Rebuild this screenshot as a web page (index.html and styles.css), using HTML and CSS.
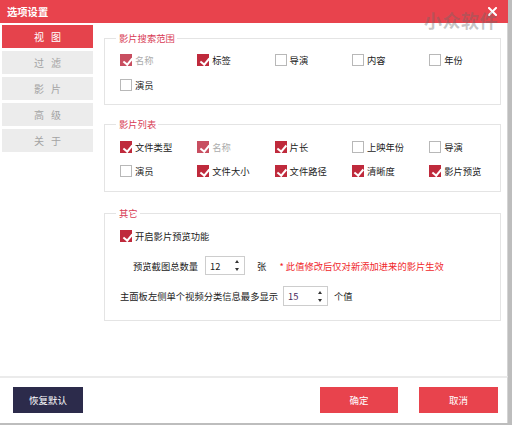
FILE: index.html
```html
<!DOCTYPE html>
<html lang="zh">
<head>
<meta charset="utf-8">
<title>选项设置</title>
<link rel="stylesheet" href="styles.css">
</head>
<body>
<div class="window">
  <header class="titlebar">
    <span class="title">选项设置</span>
    <span class="watermark">小众软件</span>
    <svg class="close" viewBox="0 0 9 9" width="9" height="9"><path d="M1 1L8 8M8 1L1 8" stroke="#fff" stroke-width="2" stroke-linecap="square"/></svg>
  </header>
  <div class="main">
    <nav class="nav">
      <div class="nav-item active">视 图</div>
      <div class="nav-item">过 滤</div>
      <div class="nav-item">影 片</div>
      <div class="nav-item">高 级</div>
      <div class="nav-item">关 于</div>
    </nav>
    <div class="content">
      <fieldset class="group g1">
        <legend>影片搜索范围</legend>
        <div class="grid">
          <label class="cb checked disabled"><span class="box"></span>名称</label>
          <label class="cb checked"><span class="box"></span>标签</label>
          <label class="cb"><span class="box"></span>导演</label>
          <label class="cb"><span class="box"></span>内容</label>
          <label class="cb"><span class="box"></span>年份</label>
          <label class="cb"><span class="box"></span>演员</label>
        </div>
      </fieldset>
      <fieldset class="group g2">
        <legend>影片列表</legend>
        <div class="grid">
          <label class="cb checked"><span class="box"></span>文件类型</label>
          <label class="cb checked disabled"><span class="box"></span>名称</label>
          <label class="cb checked"><span class="box"></span>片长</label>
          <label class="cb"><span class="box"></span>上映年份</label>
          <label class="cb"><span class="box"></span>导演</label>
          <label class="cb"><span class="box"></span>演员</label>
          <label class="cb checked"><span class="box"></span>文件大小</label>
          <label class="cb checked"><span class="box"></span>文件路径</label>
          <label class="cb checked"><span class="box"></span>清晰度</label>
          <label class="cb checked"><span class="box"></span>影片预览</label>
        </div>
      </fieldset>
      <fieldset class="group g3">
        <legend>其它</legend>
        <div class="rows">
          <label class="cb checked"><span class="box"></span>开启影片预览功能</label>
          <div class="row indent">
            <span>预览截图总数量</span>
            <div class="spin s12"><span class="val">12</span><span class="arrows"><i class="up"></i><i class="down"></i></span></div>
            <span class="unit">张</span>
            <span class="note">* 此值修改后仅对新添加进来的影片生效</span>
          </div>
          <div class="row">
            <span>主面板左侧单个视频分类信息最多显示</span>
            <div class="spin s15"><span class="val">15</span><span class="arrows"><i class="up"></i><i class="down"></i></span></div>
            <span class="unit2">个值</span>
          </div>
        </div>
      </fieldset>
    </div>
  </div>
  <footer class="footer">
    <button class="btn reset">恢复默认</button>
    <button class="btn ok">确定</button>
    <button class="btn cancel">取消</button>
  </footer>
</div>
</body>
</html>
```
FILE: styles.css
```css
* { box-sizing: border-box; }
html, body { margin: 0; padding: 0; }
body {
  width: 512px;
  height: 425px;
  overflow: hidden;
  background: #bdbdbd;
  font-family: "Noto Sans CJK SC", "Microsoft YaHei", sans-serif;
  font-size: 9.3px;
  color: #222;
}
.window {
  width: 508px;
  height: 423px;
  background: #fff;
  display: flex;
  flex-direction: column;
  position: relative;
}
.titlebar {
  height: 23px;
  flex: none;
  background: #e8434d;
  display: flex;
  align-items: center;
  padding: 0 11px 0 7px;
}
.title {
  flex: 1;
  color: #fff;
  font-weight: bold;
  font-size: 10.3px;
  line-height: 12px;
}
.close { display: block; }
.watermark {
  position: absolute;
  left: 424px;
  top: 9px;
  font-size: 18px;
  line-height: 22px;
  font-weight: bold;
  letter-spacing: 0.5px;
  color: rgba(105, 105, 105, 0.38);
  pointer-events: none;
}
.main {
  flex: 1;
  display: flex;
  padding: 2px 0 0 2px;
  border-right: 1px solid #d4d4d4;
}
.nav {
  width: 91px;
  display: flex;
  flex-direction: column;
  gap: 3px;
}
.nav-item {
  height: 23px;
  background: #ececec;
  color: #a3a3a3;
  font-size: 10px;
  line-height: 12px;
  letter-spacing: 2.4px;
  padding-left: 2.4px;
  display: flex;
  align-items: center;
  justify-content: center;
}
.nav-item.active {
  background: #e5434c;
  color: #fff;
}
.content {
  margin-left: 11px;
  width: 397px;
  padding-top: 7px;
}
.group {
  margin: 0;
  min-width: 0;
  border: 1px solid #e4e4e4;
  padding: 0 0 0 15px;
}
.group legend {
  padding: 0 2px 0 3px;
  margin-left: -4px;
  color: #d83c55;
  line-height: 12px;
  font-size: 9.3px;
}
.grid {
  display: grid;
  grid-template-columns: repeat(5, 77.3px);
}
.g1 { padding-top: 10px; padding-bottom: 13px; }
.g1 .grid { row-gap: 13px; }
.g2 { margin-top: 13px; padding-top: 11px; padding-bottom: 14px; }
.g2 .grid { row-gap: 12px; }
.g3 { margin-top: 15px; padding-top: 11px; padding-bottom: 14px; }
.cb {
  display: flex;
  align-items: center;
  height: 12px;
  line-height: 12px;
  white-space: nowrap;
}
.cb .box {
  width: 12px;
  height: 12px;
  flex: none;
  border: 1px solid #b8b8b8;
  background: #fff;
  margin-right: 3px;
  position: relative;
}
.cb.checked .box {
  background: #bf2a3c;
  border-color: #bf2a3c;
}
.cb.checked .box::after {
  content: "";
  position: absolute;
  left: 3.5px;
  top: 0.5px;
  width: 3.5px;
  height: 7px;
  border: solid #fff;
  border-width: 0 2px 2px 0;
  transform: rotate(40deg);
}
.cb.disabled { color: #ababab; }
.cb.disabled .box { background: #c84e60; border-color: #c84e60; }
.rows { display: flex; flex-direction: column; }
.row {
  display: flex;
  align-items: center;
  white-space: nowrap;
  line-height: 12px;
}
.row.indent { padding-left: 13px; margin-top: 14px; }
.row + .row { margin-top: 11px; }
.spin {
  height: 19px;
  border: 1px solid #cdcdcd;
  display: flex;
  align-items: center;
  justify-content: space-between;
  padding: 0 5px 0 4px;
}
.s12 { width: 40px; margin-left: 7px; }
.s15 { width: 45px; margin-left: 5px; height: 20px; }
.val { font-size: 9.3px; color: #222; }
.s15 .val { color: #4a2a5a; }
.arrows {
  display: flex;
  flex-direction: column;
  align-items: center;
  gap: 5px;
}
.arrows i { display: block; width: 0; height: 0; border-left: 2.5px solid transparent; border-right: 2.5px solid transparent; }
.arrows .up { border-bottom: 3px solid #333; }
.arrows .down { border-top: 3px solid #333; }
.unit { margin-left: 12px; }
.note { margin-left: 13px; color: #f0282c; }
.unit2 { margin-left: 6px; }
.footer {
  flex: none;
  display: flex;
  border-top: 2px solid #ebebeb;
  border-right: 1px solid #d4d4d4;
  padding: 9px 9px 10px 13px;
}
.btn {
  height: 26px;
  border: none;
  margin: 0;
  padding: 0;
  font-family: inherit;
  font-size: 9.5px;
  color: #fff;
  display: flex;
  align-items: center;
  justify-content: center;
}
.reset { width: 70px; background: #2c2b4b; }
.ok { width: 78px; margin-left: auto; background: #e8434d; }
.cancel { width: 79px; margin-left: 21px; background: #e8434d; }
```
